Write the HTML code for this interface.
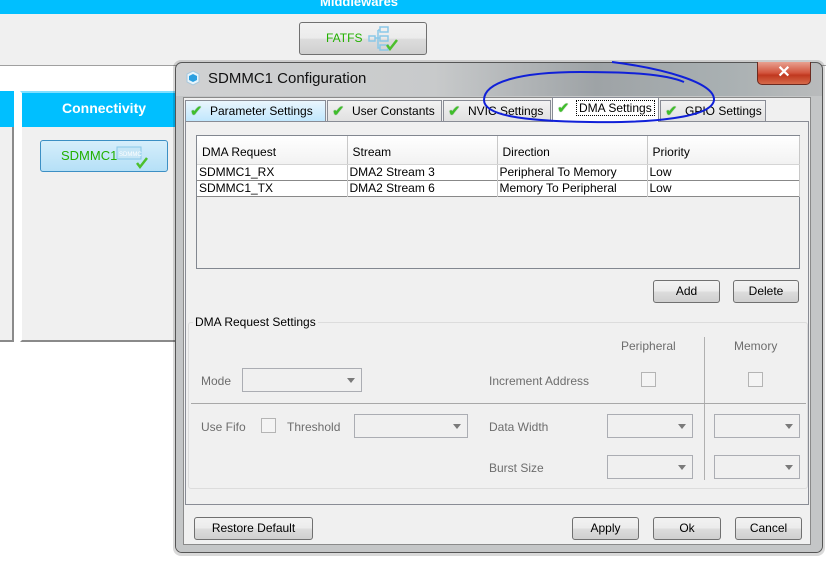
<!DOCTYPE html>
<html><head><meta charset="utf-8"><style>
*{box-sizing:border-box;margin:0;padding:0}
body{width:826px;height:565px;position:relative;overflow:hidden;background:#fff;font-family:"Liberation Sans",sans-serif;font-size:12px;color:#000}
.a{position:absolute}
.btn{position:absolute;border:1px solid #707070;border-radius:3px;background:linear-gradient(#f2f2f2 0%,#ebebeb 50%,#dddddd 51%,#cfcfcf 100%);text-align:center;font-size:12px;line-height:20px}
.tab{position:absolute;top:100px;height:22px;border:1px solid #898c95;border-bottom:none;background:linear-gradient(#f2f2f2,#e0e0e0);font-size:12px;line-height:21px;padding-left:24px;white-space:nowrap}
.chk{position:absolute;left:4px;top:0;color:#3fbf2a;font-size:15px;text-shadow:0 0 1px #1a7a10}
.combo{position:absolute;border:1px solid #abadb3;background:#f0f0f0;height:24px}
.combo:after{content:"";position:absolute;right:6px;top:9px;border-left:4px solid transparent;border-right:4px solid transparent;border-top:5px solid #7a7a7a}
.lbl{position:absolute;color:#6d6d6d;font-size:12px;white-space:nowrap}
.cb{position:absolute;width:15px;height:15px;border:1px solid #b4b4b4;background:#f4f4f4}
td{border-right:1px solid #c8c8c8;padding-left:2px;height:16px;line-height:15px;white-space:nowrap}
</style></head><body>
<div class="a" style="left:0;top:0;width:826px;height:14px;background:#00bfff"></div>
<div class="a" style="left:320px;top:-6px;color:#fff;font-weight:bold;font-size:13px">Middlewares</div>
<div class="a" style="left:0;top:14px;width:826px;height:52px;background:#f0f0f0;border-bottom:1px solid #a0a0a0"></div>
<div class="btn" style="left:299px;top:22px;width:128px;height:33px;line-height:31px;text-align:left;padding-left:26px;color:#22b000;font-size:12px">FATFS</div>
<svg class="a" style="left:368px;top:26px" width="34" height="26"><g fill="none" stroke="#8ac8e8" stroke-width="1.5"><rect x="1" y="10" width="6" height="5"/><rect x="12" y="1" width="8" height="5"/><rect x="12" y="10" width="8" height="5"/><rect x="12" y="19" width="8" height="5"/><path d="M7 12h5M10 4v18h2M10 4h2"/></g><path d="M19 19l3 4 7-9" stroke="#4cbf2c" stroke-width="2.5" fill="none"/></svg>
<div class="a" style="left:0;top:66px;width:826px;height:24px;background:#fff"></div>
<div class="a" style="left:0;top:91px;width:14px;height:36px;background:#00bfff"></div>
<div class="a" style="left:0;top:127px;width:14px;height:215px;background:#f0f0f0;border-right:2px solid #8a8a8a;border-bottom:2px solid #8a8a8a"></div>
<div class="a" style="left:20px;top:91px;width:160px;height:36px;background:#00bfff;border-left:2px solid #fff;border-top:2px solid #7fdfff;color:#fff;font-weight:bold;font-size:14px;padding:7px 0 0 40px">Connectivity</div>
<div class="a" style="left:20px;top:127px;width:160px;height:215px;background:#f0f0f0;border-left:2px solid #fff;border-bottom:2px solid #8a8a8a"></div>
<div class="a" style="left:40px;top:140px;width:128px;height:32px;border:1px solid #3c8fc4;border-radius:3px;background:linear-gradient(#d6eefb,#b5e0f7);color:#22b000;font-size:13px;line-height:30px;padding-left:20px">SDMMC1</div>
<svg class="a" style="left:115px;top:145px" width="36" height="26"><rect x="2" y="2" width="24" height="12" fill="#c6e6f6" stroke="#8ac8e8"/><text x="4" y="11" font-size="6" fill="#fff" font-family="Liberation Sans">SDMMC</text><path d="M22 18l3 4 7-9" stroke="#4cbf2c" stroke-width="2.5" fill="none"/></svg>

<div class="a" style="left:173px;top:60px;width:652px;height:496px;border-radius:8px;background:rgba(0,0,0,.15)"></div>
<div class="a" style="left:175px;top:62px;width:648px;height:491px;border:1px solid #555;border-radius:7px;background:linear-gradient(90deg,#d0d1d2 0%,#c8cacb 40%,#9ea3a6 65%,#a9b0b2 85%,#b9bbbc 100%)"></div>
<div class="a" style="left:176px;top:96px;width:646px;height:456px;background:#c4c6c7;border-radius:0 0 6px 6px"></div>
<svg class="a" style="left:185px;top:70px" width="16" height="16"><path d="M8 1l6 3v8l-6 3-6-3V4z" fill="#e8f4fb" stroke="#a8c8dc"/><path d="M8 4l4 2v4l-4 2-4-2V6z" fill="#2a9fe0"/></svg>
<div class="a" style="left:208px;top:70px;font-size:15px;color:#111">SDMMC1 Configuration</div>
<div class="a" style="left:757px;top:62px;width:54px;height:23px;border:1px solid #6b2a20;border-top:none;border-radius:0 0 5px 5px;background:linear-gradient(#e8a090,#d2533c 50%,#c0381f 60%,#d66a4a);color:#fff;font-weight:bold;font-size:16px;text-align:center;line-height:22px">✕</div>
<div class="a" style="left:183px;top:97px;width:628px;height:448px;background:#f0f0f0;border:1px solid #8a8a8a"></div>
<div class="tab" style="left:185px;width:141px;background:linear-gradient(#eaf6fd,#bee6fd)"><span class="chk">✔</span>Parameter Settings</div>
<div class="tab" style="left:327px;width:115px"><span class="chk">✔</span>User Constants</div>
<div class="tab" style="left:443px;width:108px"><span class="chk">✔</span>NVIC Settings</div>
<div class="tab" style="left:552px;top:97px;height:25px;width:107px;background:#fff;z-index:2"><span class="chk">✔</span><span style="outline:1px dotted #000;padding:0 2px">DMA Settings</span></div>
<div class="tab" style="left:660px;width:106px"><span class="chk">✔</span>GPIO Settings</div>
<div class="a" style="left:185px;top:121px;width:624px;height:384px;background:#f0f0f0;border:1px solid #898c95;z-index:1"></div>
<div class="a" style="left:196px;top:135px;width:604px;height:134px;border:1px solid #828790;background:#f0f0f0;z-index:2">
<table style="border-collapse:collapse;width:602px;font-size:12px;table-layout:fixed">
<colgroup><col style="width:150px"><col style="width:150px"><col style="width:150px"><col style="width:152px"></colgroup>
<tr style="background:linear-gradient(#fff,#f2f2f2)"><td style="height:28px;padding:6px 0 0 5px;border-bottom:1px solid #d5d5d5">DMA Request</td><td style="padding:6px 0 0 5px;border-bottom:1px solid #d5d5d5">Stream</td><td style="padding:6px 0 0 5px;border-bottom:1px solid #d5d5d5">Direction</td><td style="padding:6px 0 0 5px;border-bottom:1px solid #d5d5d5">Priority</td></tr>
<tr style="background:#fff;border-bottom:1px solid #888"><td>SDMMC1_RX</td><td>DMA2 Stream 3</td><td>Peripheral To Memory</td><td>Low</td></tr>
<tr style="background:#fff;border-bottom:1px solid #888"><td>SDMMC1_TX</td><td>DMA2 Stream 6</td><td>Memory To Peripheral</td><td>Low</td></tr>
</table></div>
<div class="btn" style="left:653px;top:280px;width:67px;height:23px;z-index:2">Add</div>
<div class="btn" style="left:733px;top:280px;width:66px;height:23px;z-index:2">Delete</div>
<div class="a" style="left:188px;top:322px;width:620px;height:167px;border:1px solid #dcdcdc;border-radius:3px;z-index:2"></div>
<div class="a" style="left:193px;top:315px;background:#f0f0f0;padding:0 2px;z-index:3;font-size:12px">DMA Request Settings</div>
<div class="a" style="z-index:3;left:0;top:0">
<div class="lbl" style="left:621px;top:339px">Peripheral</div>
<div class="lbl" style="left:734px;top:339px">Memory</div>
<div class="a" style="left:704px;top:337px;width:1px;height:143px;background:#b0b0b0"></div>
<div class="lbl" style="left:201px;top:374px">Mode</div>
<div class="combo" style="left:242px;top:368px;width:120px"></div>
<div class="lbl" style="left:489px;top:374px">Increment Address</div>
<div class="cb" style="left:641px;top:372px"></div>
<div class="cb" style="left:748px;top:372px"></div>
<div class="a" style="left:191px;top:403px;width:615px;height:1px;background:#a8a8a8"></div>
<div class="lbl" style="left:201px;top:420px">Use Fifo</div>
<div class="cb" style="left:261px;top:418px"></div>
<div class="lbl" style="left:287px;top:420px">Threshold</div>
<div class="combo" style="left:354px;top:414px;width:114px"></div>
<div class="lbl" style="left:489px;top:420px">Data Width</div>
<div class="combo" style="left:607px;top:414px;width:86px"></div>
<div class="combo" style="left:714px;top:414px;width:86px"></div>
<div class="lbl" style="left:489px;top:461px">Burst Size</div>
<div class="combo" style="left:607px;top:455px;width:86px"></div>
<div class="combo" style="left:714px;top:455px;width:86px"></div>
</div>
<div class="btn" style="left:194px;top:517px;width:119px;height:23px">Restore Default</div>
<div class="btn" style="left:572px;top:517px;width:67px;height:23px">Apply</div>
<div class="btn" style="left:653px;top:517px;width:68px;height:23px">Ok</div>
<div class="btn" style="left:735px;top:517px;width:67px;height:23px">Cancel</div>
<svg class="a" style="left:0;top:0;z-index:5" width="826" height="565"><path d="M612 62 C660 68 715 82 714 100 C712 118 650 123 590 122 C520 121 484 115 484 100 C484 82 520 72 580 72 C630 72 665 74 684 82" fill="none" stroke="#1020d8" stroke-width="2"/></svg>
</body></html>
